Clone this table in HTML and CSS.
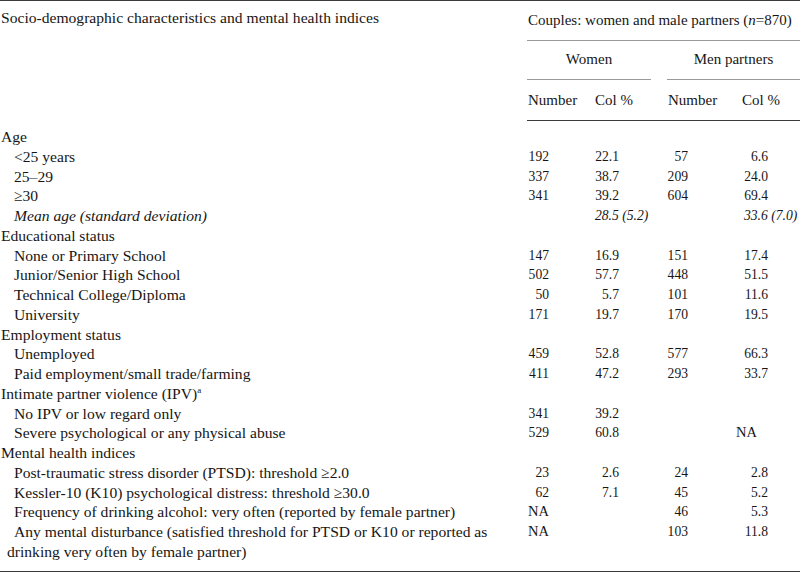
FILE: index.html
```html
<!DOCTYPE html>
<html lang="en">
<head>
<meta charset="utf-8">
<title>Socio-demographic characteristics and mental health indices</title>
<link rel="stylesheet" href="styles.css">
</head>
<body>
<table class="tbl">
  <colgroup>
    <col class="c-label">
    <col class="c-wn">
    <col class="c-wp">
    <col class="c-mn">
    <col class="c-mp">
  </colgroup>
  <thead>
    <tr class="h1">
      <th rowspan="3" class="h-label">Socio-demographic characteristics and mental health indices</th>
      <th colspan="4" class="h-couples"><div class="rule-wide">Couples: women and male partners (<i>n</i>=870)</div></th>
    </tr>
    <tr class="h2">
      <th colspan="2" class="h-group"><div class="rule-women">Women</div></th>
      <th colspan="2" class="h-group"><div class="rule-men">Men partners</div></th>
    </tr>
    <tr class="h3">
      <th class="h-sub h-wn">Number</th>
      <th class="h-sub h-wp">Col %</th>
      <th class="h-sub h-mn">Number</th>
      <th class="h-sub h-mp">Col %</th>
    </tr>
  </thead>
  <tbody>
    <tr class="first"><td class="lbl">Age</td><td></td><td></td><td></td><td></td></tr>
    <tr><td class="lbl sub">&lt;25 years</td><td class="wn"><span class="n">192</span></td><td class="wp"><span class="p">22.1</span></td><td class="mn"><span class="n">57</span></td><td class="mp"><span class="p">6.6</span></td></tr>
    <tr><td class="lbl sub">25–29</td><td class="wn"><span class="n">337</span></td><td class="wp"><span class="p">38.7</span></td><td class="mn"><span class="n">209</span></td><td class="mp"><span class="p">24.0</span></td></tr>
    <tr><td class="lbl sub">≥30</td><td class="wn"><span class="n">341</span></td><td class="wp"><span class="p">39.2</span></td><td class="mn"><span class="n">604</span></td><td class="mp"><span class="p">69.4</span></td></tr>
    <tr><td class="lbl sub"><i>Mean age (standard deviation)</i></td><td class="wn"></td><td class="wp"><i class="mean">28.5 (5.2)</i></td><td class="mn"></td><td class="mp"><i class="mean">33.6 (7.0)</i></td></tr>
    <tr><td class="lbl">Educational status</td><td></td><td></td><td></td><td></td></tr>
    <tr><td class="lbl sub">None or Primary School</td><td class="wn"><span class="n">147</span></td><td class="wp"><span class="p">16.9</span></td><td class="mn"><span class="n">151</span></td><td class="mp"><span class="p">17.4</span></td></tr>
    <tr><td class="lbl sub">Junior/Senior High School</td><td class="wn"><span class="n">502</span></td><td class="wp"><span class="p">57.7</span></td><td class="mn"><span class="n">448</span></td><td class="mp"><span class="p">51.5</span></td></tr>
    <tr><td class="lbl sub">Technical College/Diploma</td><td class="wn"><span class="n">50</span></td><td class="wp"><span class="p">5.7</span></td><td class="mn"><span class="n">101</span></td><td class="mp"><span class="p">11.6</span></td></tr>
    <tr><td class="lbl sub">University</td><td class="wn"><span class="n">171</span></td><td class="wp"><span class="p">19.7</span></td><td class="mn"><span class="n">170</span></td><td class="mp"><span class="p">19.5</span></td></tr>
    <tr><td class="lbl">Employment status</td><td></td><td></td><td></td><td></td></tr>
    <tr><td class="lbl sub">Unemployed</td><td class="wn"><span class="n">459</span></td><td class="wp"><span class="p">52.8</span></td><td class="mn"><span class="n">577</span></td><td class="mp"><span class="p">66.3</span></td></tr>
    <tr><td class="lbl sub">Paid employment/small trade/farming</td><td class="wn"><span class="n">411</span></td><td class="wp"><span class="p">47.2</span></td><td class="mn"><span class="n">293</span></td><td class="mp"><span class="p">33.7</span></td></tr>
    <tr><td class="lbl">Intimate partner violence (IPV)<sup>a</sup></td><td></td><td></td><td></td><td></td></tr>
    <tr><td class="lbl sub">No IPV or low regard only</td><td class="wn"><span class="n">341</span></td><td class="wp"><span class="p">39.2</span></td><td class="mn"></td><td class="mp"></td></tr>
    <tr><td class="lbl sub">Severe psychological or any physical abuse</td><td class="wn"><span class="n">529</span></td><td class="wp"><span class="p">60.8</span></td><td class="mn"></td><td class="mp"><span class="na">NA</span></td></tr>
    <tr><td class="lbl">Mental health indices</td><td></td><td></td><td></td><td></td></tr>
    <tr><td class="lbl sub">Post-traumatic stress disorder (PTSD): threshold ≥2.0</td><td class="wn"><span class="n">23</span></td><td class="wp"><span class="p">2.6</span></td><td class="mn"><span class="n">24</span></td><td class="mp"><span class="p">2.8</span></td></tr>
    <tr><td class="lbl sub">Kessler-10 (K10) psychological distress: threshold ≥30.0</td><td class="wn"><span class="n">62</span></td><td class="wp"><span class="p">7.1</span></td><td class="mn"><span class="n">45</span></td><td class="mp"><span class="p">5.2</span></td></tr>
    <tr><td class="lbl sub">Frequency of drinking alcohol: very often (reported by female partner)</td><td class="wn"><span class="n na-w">NA</span></td><td class="wp"></td><td class="mn"><span class="n">46</span></td><td class="mp"><span class="p">5.3</span></td></tr>
    <tr class="last"><td class="lbl sub hang">Any mental disturbance (satisfied threshold for PTSD or K10 or reported as<br>drinking very often by female partner)</td><td class="wn"><span class="n na-w">NA</span></td><td class="wp"></td><td class="mn"><span class="n">103</span></td><td class="mp"><span class="p">11.8</span></td></tr>
  </tbody>
</table>
</body>
</html>
```

FILE: styles.css
```css
html, body {
  margin: 0;
  padding: 0;
  background: #ffffff;
}

body {
  font-family: "Liberation Serif", "Times New Roman", serif;
  font-size: 15.6px;
  color: #161616;
}

.tbl {
  width: 800px;
  border-collapse: collapse;
  table-layout: fixed;
  border-top: 1.5px solid #3a3a3a;
  border-bottom: 1.5px solid #3a3a3a;
}

.c-label { width: 527px; }
.c-wn { width: 66px; }
.c-wp { width: 74px; }
.c-mn { width: 75px; }
.c-mp { width: 58px; }

th {
  font-weight: normal;
  text-align: left;
  padding: 0;
  white-space: nowrap;
  font-size: 15px;
}

th.h-label {
  vertical-align: top;
  padding: 8px 0 0 1px;
  line-height: 18px;
  font-size: 15.6px;
}

.h1 th.h-couples {
  height: 40px;
  vertical-align: bottom;
  padding: 0;
}

.rule-wide {
  padding: 0 0 11px 1px;
  border-bottom: 1px solid #9a9a9a;
  line-height: 18px;
}

.h2 th.h-group {
  height: 39px;
  vertical-align: bottom;
  text-align: center;
}

.rule-women {
  margin-right: 16px;
  padding-bottom: 11px;
  border-bottom: 1px solid #9a9a9a;
  line-height: 18px;
}

.rule-men {
  padding-bottom: 11px;
  border-bottom: 1px solid #9a9a9a;
  line-height: 18px;
}

.h3 th.h-sub {
  height: 39px;
  vertical-align: middle;
  border-bottom: 1.5px solid #3a3a3a;
  line-height: 18px;
  padding-bottom: 1px;
}

.h-wn { padding-left: 1px; }
.h-wp { padding-left: 2px; }
.h-mn { padding-left: 1px; }

td {
  padding: 0;
  height: 19.75px;
  line-height: 19.75px;
  vertical-align: top;
  white-space: nowrap;
}

tr.first td { padding-top: 6px; }
tr.last td { padding-bottom: 9px; }

.lbl { padding-left: 1px; }
.lbl.sub { padding-left: 14px; }
.lbl.hang {
  padding-left: 7px;
  text-indent: 7px;
}

sup {
  font-size: 9px;
  line-height: 0;
  vertical-align: 6px;
}

.wn, .wp, .mn, .mp {
  font-size: 13.6px;
}

.wn { padding-left: 1px; }
.wp { padding-left: 2px; }
.mn { padding-left: 0; }
.mp { padding-left: 2px; }

.n {
  display: inline-block;
  width: 21px;
  text-align: right;
}

.na-w {
  font-size: 14.5px;
}

.p {
  display: inline-block;
  width: 24px;
  text-align: right;
}

.mean {
  font-size: 13.6px;
}

.na {
  display: inline-block;
  margin-left: -8px;
  font-size: 14.5px;
}
```
